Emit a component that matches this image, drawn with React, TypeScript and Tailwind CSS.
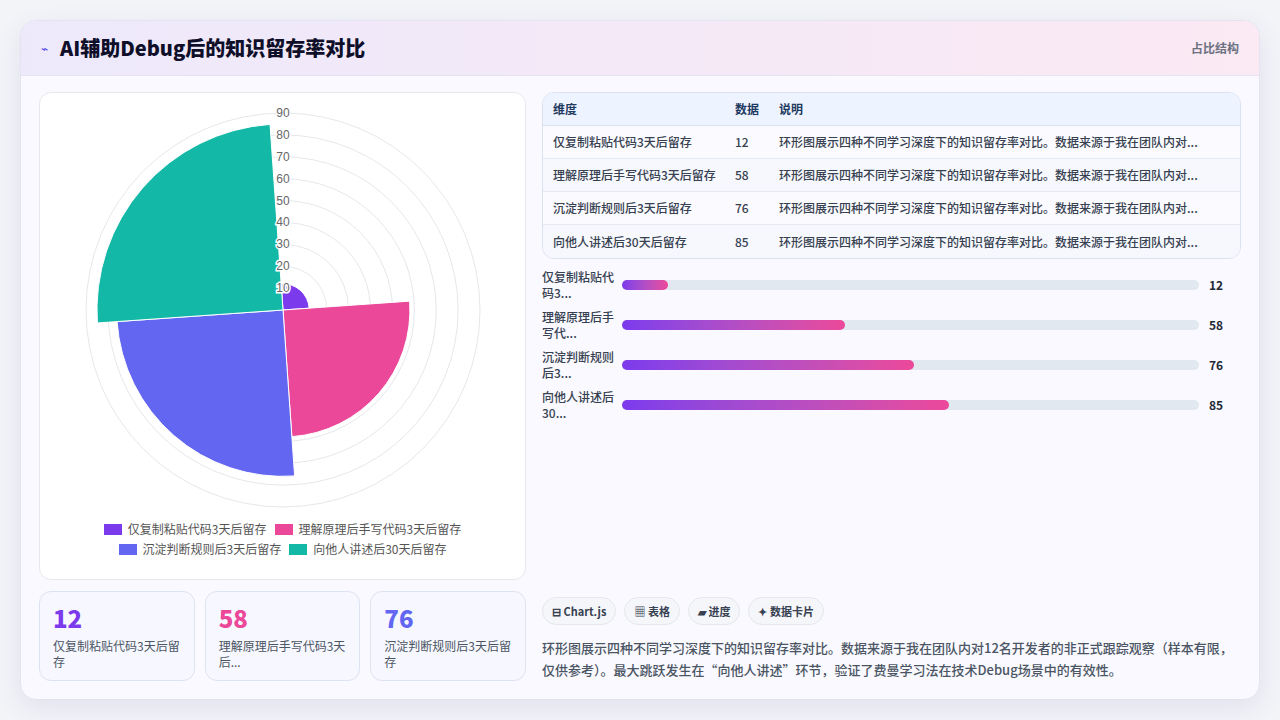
import React from 'react';

const data = [
    { name: '仅复制粘贴代码3天后留存', short: ['仅复制粘贴代', '码3...'], value: 12, color: '#7c3aed', card: '仅复制粘贴代码3天后留存', cardColor: 'text-[#7c3aed]' },
    { name: '理解原理后手写代码3天后留存', short: ['理解原理后手', '写代...'], value: 58, color: '#ec4899', card: '理解原理后手写代码3天后...', cardColor: 'text-[#ec4899]' },
    { name: '沉淀判断规则后3天后留存', short: ['沉淀判断规则', '后3...'], value: 76, color: '#6366f1', card: '沉淀判断规则后3天后留存', cardColor: 'text-[#6366f1]' },
    { name: '向他人讲述后30天后留存', short: ['向他人讲述后', '30...'], value: 85, color: '#14b8a6', card: '', cardColor: '' },
];

const desc = '环形图展示四种不同学习深度下的知识留存率对比。数据来源于我在团队内对...';
const font = { fontFamily: '"Noto Sans CJK SC", "Noto Sans", sans-serif' };

const cx = 242;
const cy = 214;
const unit = 197 / 90;
const rot = -4;

function sector(value: number, i: number) {
    const r = value * unit;
    const a0 = (-90 + i * 90 + rot) * (Math.PI / 180);
    const a1 = (i * 90 + rot) * (Math.PI / 180);
    const x0 = cx + r * Math.cos(a0);
    const y0 = cy + r * Math.sin(a0);
    const x1 = cx + r * Math.cos(a1);
    const y1 = cy + r * Math.sin(a1);
    return `M${cx},${cy} L${x0},${y0} A${r},${r} 0 0 1 ${x1},${y1} Z`;
}

const ticks = [10, 20, 30, 40, 50, 60, 70, 80, 90];

const PolarChart = () => (
    <svg width="484" height="420" viewBox="0 0 484 420">
        {ticks.map((t) => (
            <circle key={t} cx={cx} cy={cy} r={t * unit} fill="none" stroke="#e5e7eb" strokeWidth="1" />
        ))}
        {data.map((d, i) => (
            <path key={d.name} d={sector(d.value, i)} fill={d.color} stroke="#fff" strokeWidth="1" />
        ))}
        {ticks.map((t) => (
            <text key={t} x={cx} y={cy - t * unit + 4} textAnchor="middle" fontSize="12" fill="#666" fontFamily="Liberation Sans, sans-serif" stroke="#fff" strokeWidth="3" paintOrder="stroke">
                {t}
            </text>
        ))}
    </svg>
);

export default function App() {
    return (
        <div className="w-[1280px] h-[720px] bg-[#f3f4f8] p-5" style={font}>
            <div className="w-full h-full rounded-2xl border border-[#e4e4f0] bg-[#f9f9ff] shadow-[0_8px_24px_rgba(100,100,160,0.12)] overflow-hidden flex flex-col">
                <div className="h-[56px] px-5 flex items-center justify-between bg-gradient-to-r from-[#ede9fb] to-[#fbe9f3] border-b border-[#e6e4f2]">
                    <div className="flex items-center gap-3">
                        <span className="text-[#4f46e5] text-xs">⌁</span>
                        <span className="text-[20px] font-black text-[#0f0f2a]">AI辅助Debug后的知识留存率对比</span>
                    </div>
                    <span className="text-xs font-semibold text-[#6b7280]">占比结构</span>
                </div>
                <div className="flex-1 flex gap-4 px-[18px] pt-4 pb-[18px]">
                    <div className="w-[487px] flex flex-col gap-[11px]">
                        <div className="h-[488px] rounded-xl border border-[#e5e7eb] bg-white flex flex-col items-center pt-[3px]">
                            <PolarChart />
                            <div className="flex flex-col items-center gap-[4px] text-xs text-[#555] mt-[5px]">
                                <div className="flex gap-2">
                                    {data.slice(0, 2).map((d) => (
                                        <span key={d.name} className="flex items-center gap-[6px]">
                                            <span className="w-[18px] h-[11px]" style={{ background: d.color }} />
                                            {d.name}
                                        </span>
                                    ))}
                                </div>
                                <div className="flex gap-2">
                                    {data.slice(2).map((d) => (
                                        <span key={d.name} className="flex items-center gap-[6px]">
                                            <span className="w-[18px] h-[11px]" style={{ background: d.color }} />
                                            {d.name}
                                        </span>
                                    ))}
                                </div>
                            </div>
                        </div>
                        <div className="flex gap-[10px]">
                            {data.slice(0, 3).map((d) => (
                                <div key={d.name} className="flex-1 h-[90px] rounded-xl border border-[#dde3f0] bg-[#f7f8ff] px-[13px] pt-[12px]">
                                    <div className={`text-[24px] font-extrabold leading-7 ${d.cardColor}`}>{d.value}</div>
                                    <div className="text-xs text-[#4b5563] leading-4 mt-[6px]">{d.card}</div>
                                </div>
                            ))}
                        </div>
                    </div>
                    <div className="flex-1 flex flex-col">
                        <div className="rounded-xl border border-[#dbe3ef] overflow-hidden bg-[#f9f9ff]">
                            <div className="h-[33px] flex items-center bg-[#eef4ff] text-xs font-semibold text-[#1e3a5f] border-b border-[#dbe3ef]">
                                <span className="w-[192px] pl-[10px]">维度</span>
                                <span className="w-[44px]">数据</span>
                                <span>说明</span>
                            </div>
                            {data.map((d, i) => (
                                <div key={d.name} className={`h-[33px] flex items-center text-xs font-medium text-[#374151] ${i < 3 ? 'border-b border-[#e5e9f2]' : ''} ${i % 2 ? 'bg-[#f6f8fd]' : 'bg-[#fbfbff]'}`}>
                                    <span className="w-[192px] pl-[10px]">{d.name}</span>
                                    <span className="w-[44px]">{d.value}</span>
                                    <span>{desc}</span>
                                </div>
                            ))}
                        </div>
                        <div className="flex flex-col gap-[8px] mt-[10px]">
                            {data.map((d) => (
                                <div key={d.name} className="flex items-center h-[32px]">
                                    <div className="w-[80px] text-xs font-medium leading-[16px] text-[#374151]">
                                        {d.short[0]}
                                        <br />
                                        {d.short[1]}
                                    </div>
                                    <div className="flex-1 h-[10px] rounded-full bg-[#e2e8f0]">
                                        <div className="h-full rounded-full bg-gradient-to-r from-[#7c3aed] to-[#ec4899]" style={{ width: `${(d.value / 150) * 100}%` }} />
                                    </div>
                                    <div className="w-[42px] pl-[10px] text-xs font-bold text-[#1f2937]">{d.value}</div>
                                </div>
                            ))}
                        </div>
                        <div className="flex-1" />
                        <div className="flex gap-[8px] mb-[12px]">
                            {['⊟ Chart.js', '▦ 表格', '▰ 进度', '✦ 数据卡片'].map((t) => (
                                <span key={t} className="h-[28px] px-[9px] flex items-center rounded-full border border-[#e5e7eb] bg-[#f5f6fa] text-[11px] font-semibold text-[#374151]">
                                    {t}
                                </span>
                            ))}
                        </div>
                        <p className="text-[13px] leading-[22px] font-medium text-[#4b5563]">
                            环形图展示四种不同学习深度下的知识留存率对比。数据来源于我在团队内对12名开发者的非正式跟踪观察（样本有限，仅供参考）。最大跳跃发生在“向他人讲述”环节，验证了费曼学习法在技术Debug场景中的有效性。
                        </p>
                    </div>
                </div>
            </div>
        </div>
    );
}
